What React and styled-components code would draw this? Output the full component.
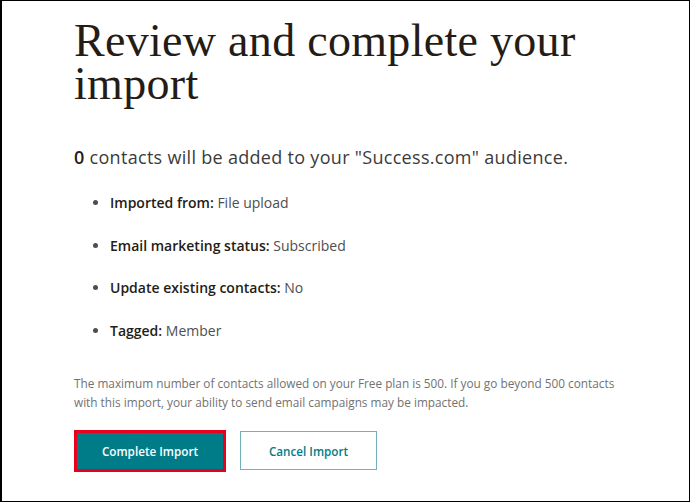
import styled, { createGlobalStyle } from "styled-components";

const GlobalStyle = createGlobalStyle`
  html, body {
    margin: 0;
    padding: 0;
    background: #fff;
  }
  * {
    box-sizing: border-box;
  }
`;

const Frame = styled.div`
  width: 690px;
  height: 502px;
  border: 1px solid #000;
  border-left-width: 2px;
  padding: 18px 0 0 72px;
  overflow: hidden;
  font-family: "Open Sans", "Liberation Sans", sans-serif;
  color: #241c15;
`;

const Title = styled.h1`
  margin: 0;
  max-width: 540px;
  font-family: "Liberation Serif", "DejaVu Serif", serif;
  font-weight: 400;
  font-size: 46px;
  line-height: 43px;
  color: #241c15;
  letter-spacing: 0.3px;
`;

const Summary = styled.p`
  margin: 40px 0 0;
  font-size: 18px;
  line-height: 24px;
  letter-spacing: 0.3px;
  color: #3b3b3b;
`;

const Count = styled.strong`
  font-weight: 600;
  color: #241c15;
`;

const Details = styled.ul`
  margin: 13px 0 0;
  padding: 0 0 0 36px;
  list-style: disc;
`;

const Item = styled.li`
  font-size: 14px;
  line-height: 22px;
  padding: 10px 0;
  color: #4e4e4e;
  & + & {
    margin-top: 0.6px;
  }
`;

const Label = styled.span`
  font-weight: 600;
  color: #241c15;
`;

const Note = styled.p`
  margin: 22px 0 0;
  font-size: 11.8px;
  line-height: 19px;
  color: #727272;
  max-width: 548px;
`;

const Actions = styled.div`
  display: flex;
  align-items: center;
  gap: 14px;
  margin-top: 18px;
`;

const Button = styled.button`
  height: ${(p) => (p.$primary ? "42px" : "39px")};
  padding: 0;
  width: ${(p) => (p.$primary ? "152px" : "137px")};
  font-family: "Open Sans", "Liberation Sans", sans-serif;
  font-size: 11.7px;
  font-weight: 600;
  cursor: pointer;
  background: ${(p) => (p.$primary ? "#007c89" : "#fff")};
  color: ${(p) => (p.$primary ? "#fff" : "#007c89")};
  border: ${(p) => (p.$primary ? "3px solid #e8001c" : "1.5px solid #72b3bb")};
`;

export default function App() {
  return (
    <>
      <GlobalStyle />
      <Frame>
        <Title>Review and complete your import</Title>
        <Summary>
          <Count>0</Count> contacts will be added to your "Success.com" audience.
        </Summary>
        <Details>
          <Item>
            <Label>Imported from:</Label> File upload
          </Item>
          <Item>
            <Label>Email marketing status:</Label> Subscribed
          </Item>
          <Item>
            <Label>Update existing contacts:</Label> No
          </Item>
          <Item>
            <Label>Tagged:</Label> Member
          </Item>
        </Details>
        <Note>
          The maximum number of contacts allowed on your Free plan is 500. If you go beyond 500 contacts
          with this import, your ability to send email campaigns may be impacted.
        </Note>
        <Actions>
          <Button $primary>Complete Import</Button>
          <Button>Cancel Import</Button>
        </Actions>
      </Frame>
    </>
  );
}
